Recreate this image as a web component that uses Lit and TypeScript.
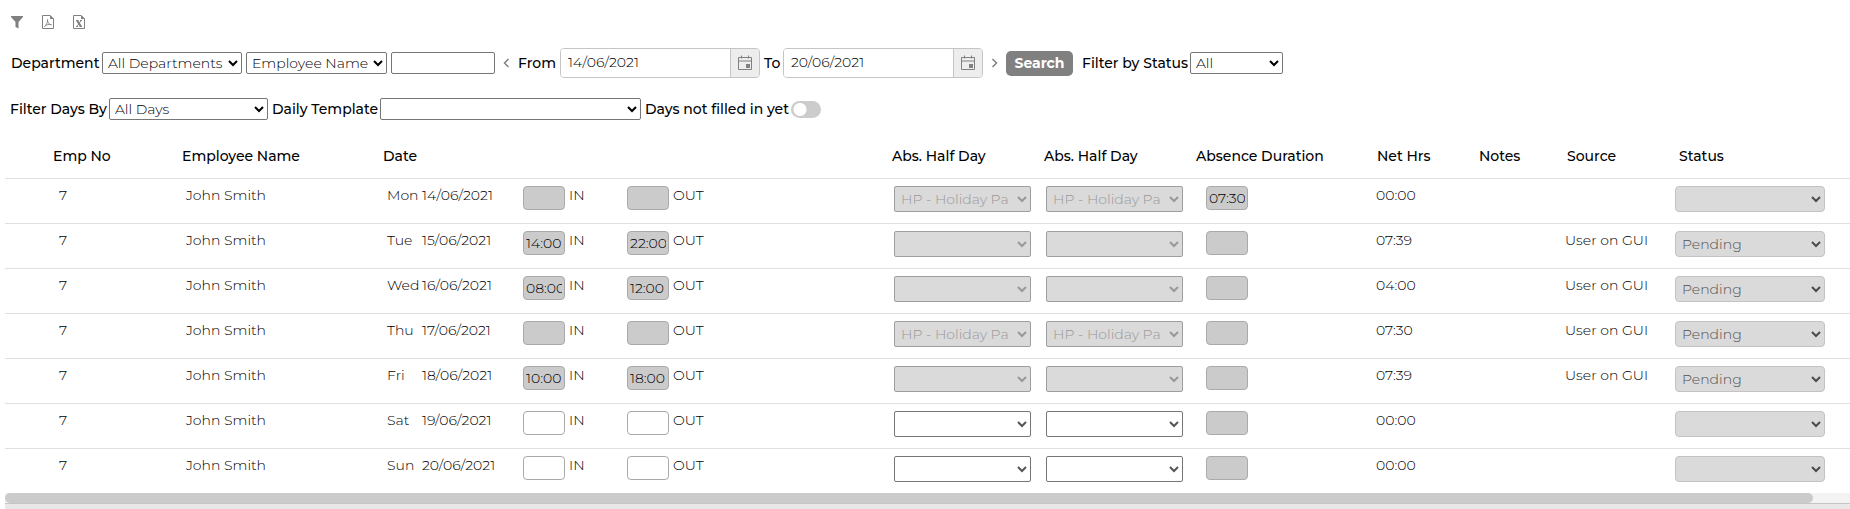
import { LitElement, html, css, svg, nothing } from "lit";
import { customElement } from "lit/decorators.js";

interface Day {
  name: string;
  date: string;
  in: string;
  out: string;
  absence: string;
  duration: string;
  net: string;
  source: string;
  status: string;
  open?: boolean;
}

const HOLIDAY = "HP - Holiday Pa";

const DAYS: Day[] = [
  { name: "Mon", date: "14/06/2021", in: "", out: "", absence: HOLIDAY, duration: "07:30", net: "00:00", source: "", status: "" },
  { name: "Tue", date: "15/06/2021", in: "14:00", out: "22:00", absence: "", duration: "", net: "07:39", source: "User on GUI", status: "Pending" },
  { name: "Wed", date: "16/06/2021", in: "08:00", out: "12:00", absence: "", duration: "", net: "04:00", source: "User on GUI", status: "Pending" },
  { name: "Thu", date: "17/06/2021", in: "", out: "", absence: HOLIDAY, duration: "", net: "07:30", source: "User on GUI", status: "Pending" },
  { name: "Fri", date: "18/06/2021", in: "10:00", out: "18:00", absence: "", duration: "", net: "07:39", source: "User on GUI", status: "Pending" },
  { name: "Sat", date: "19/06/2021", in: "", out: "", absence: "", duration: "", net: "00:00", source: "", status: "", open: true },
  { name: "Sun", date: "20/06/2021", in: "", out: "", absence: "", duration: "", net: "00:00", source: "", status: "", open: true },
];

const sheet = svg`<path d="M.5 .5H8L11.500 4V13.500H.5Z" fill="none" stroke="#808080"/><path d="M8 0L12 4H8Z" fill="#808080"/>`;

@customElement("app-root")
export class AppRoot extends LitElement {
  static styles = css`
    :host {
      display: block;
      background: #fff;
      color: #000;
      font: 300 14px/18px Montserrat, Inter, sans-serif;
    }
    * { box-sizing: border-box; }
    input, select, button { font: inherit; color: inherit; margin: 0; }
    svg { display: block; }
    .tools {
      display: flex;
      gap: 19px;
      padding: 15px 11px 0;
    }
    .tool, .step {
      border: 0;
      padding: 0;
      background: none;
    }
    .filters {
      display: flex;
      align-items: center;
      gap: 4px;
      white-space: nowrap;
      padding-left: 11px;
      height: 30px;
    }
    .first { margin-top: 19px; }
    .second { margin-top: 16px; padding-left: 10px; }
    .label { font-weight: 500; }
    .w-dept { width: 87px; }
    .w-from { width: 38px; }
    .w-to { width: 15px; }
    .w-status { width: 104px; }
    .w-days { width: 95px; }
    .w-template { width: 104px; }
    .w-empty { width: 142px; }
    .box {
      height: 22px;
      border: 1px solid #767676;
      border-radius: 2px;
      background: #fff;
      padding: 0;
    }
    select.box { padding-left: 1px; }
    .s-dept { width: 140px; }
    .s-name { width: 141px; }
    .s-text { width: 104px; }
    .s-status { width: 93px; }
    .s-days { width: 159px; }
    .s-template { width: 261px; }
    .step { width: 7px; margin: 0 4px; }
    .date {
      display: flex;
      width: 200px;
      height: 30px;
      border: 1px solid #c5c5c5;
      border-radius: 4px;
      overflow: hidden;
    }
    .date input {
      flex: 1;
      min-width: 0;
      border: 0;
      padding: 0 7px 3px;
      background: #fff;
    }
    .date button {
      width: 29px;
      border: 0;
      border-left: 1px solid #c5c5c5;
      padding: 0 0 0 6px;
      background: #ededed;
    }
    .search {
      width: 67px;
      height: 25px;
      margin-right: 5px;
      padding: 0;
      border: 0;
      border-radius: 5px;
      background: #808080;
      color: #fff;
      font-weight: 700;
    }
    .toggle {
      appearance: none;
      width: 30px;
      height: 17px;
      border-radius: 9px;
      background: radial-gradient(circle at 9px 50%, #fff 6px, #ccc 7px);
    }
    .toggle:checked { background: radial-gradient(circle at 21px 50%, #fff 6px, #808080 7px); }
    .grid {
      margin: 16px 0 0 5px;
      overflow: hidden;
    }
    table {
      width: 100%;
      table-layout: fixed;
      border-collapse: collapse;
    }
    th {
      height: 38px;
      padding: 0 0 6px;
      text-align: left;
      vertical-align: middle;
      font-weight: 500;
      white-space: nowrap;
    }
    td {
      height: 45px;
      padding: 7px 0 0;
      vertical-align: top;
      white-space: nowrap;
      border-top: 1px solid #e0e0e0;
    }
    .c0 { width: 48px; }
    .c1 { width: 129px; }
    .c2 { width: 201px; }
    .c3 { width: 140px; }
    .c4 { width: 104px; }
    .c5 { width: 264px; }
    .c6 { width: 152px; }
    .c7 { width: 180px; }
    .c8 { width: 102px; }
    .c9 { width: 88px; }
    .c10 { width: 110px; }
    th.abs, th.dur { padding-left: 1px; }
    th.net, th.notes, th.source { padding-left: 2px; }
    th.status { padding-left: 4px; }
    td.num { padding-left: 6px; }
    td.inset { padding-left: 4px; }
    td.abs { padding-left: 3px; }
    td.dur { padding-left: 11px; }
    td.net { padding-left: 1px; }
    .day { display: inline-block; width: 35px; }
    .punch { display: flex; gap: 4px; }
    .time {
      display: block;
      width: 42px;
      height: 24px;
      padding: 0 2px;
      border: 1px solid #aaa;
      border-radius: 4px;
      background: #fff;
    }
    .time:disabled { background: #cbcbcb; color: #000; }
    .absence, .state {
      display: block;
      height: 26px;
      border: 1px solid #767676;
      border-radius: 2px;
      padding: 0 0 0 2px;
      background: #fff;
      color: #555;
    }
    .absence { width: 137px; }
    .absence:disabled {
      border-color: #767676;
      background: #cbcbcb;
      color: #6d6d6d;
      opacity: .7;
    }
    .state {
      width: 150px;
      border-radius: 4px;
      border-color: #aaa;
    }
    .state:disabled { background: #cbcbcb; color: #000; opacity: .7; }
    .track { height: 10px; background: #f3f3f3; }
    .thumb {
      width: 98%;
      height: 10px;
      border-radius: 5px;
      background: #cbcbcb;
    }
    .foot {
      height: 6px;
      border-top: 1px solid #c5c5c5;
      background: #e8e8e8;
    }
  `;

  private date(id: string, value: string) {
    return html`<div class="date">
      <input id=${id} type="text" .value=${value} />
      <button type="button" aria-label="Open calendar">
        <svg width="16" height="16" viewBox="0 0 16 16" fill="none" stroke="#808080">
          <path d="M1.500 2.500h13v12h-13zM1 6h14M4.500 .5v3M11.500 .5v3" />
          <path d="M9 9h4v4H9z" fill="#808080" stroke="none" />
        </svg>
      </button>
    </div>`;
  }

  private step(label: string, d: string) {
    return html`<button class="step" type="button" aria-label=${label}>
      <svg width="7" height="10" viewBox="0 0 7 10" fill="none" stroke="#808080" stroke-width="1.500"><path d=${d} /></svg>
    </button>`;
  }

  private absence(day: Day, label: string) {
    return html`<td class="abs">
      <select class="absence" aria-label=${label} ?disabled=${!day.open}><option>${day.absence}</option></select>
    </td>`;
  }

  private row(day: Day) {
    const locked = !day.open;
    return html`<tr>
      <td></td>
      <td class="num">7</td>
      <td class="inset">John Smith</td>
      <td class="inset"><span class="day">${day.name}</span>${day.date}</td>
      <td><label class="punch"><input class="time" type="text" .value=${day.in} ?disabled=${locked} />IN</label></td>
      <td><label class="punch"><input class="time" type="text" .value=${day.out} ?disabled=${locked} />OUT</label></td>
      ${this.absence(day, "First half day absence")}
      ${this.absence(day, "Second half day absence")}
      <td class="dur"><input class="time" type="text" aria-label="Absence duration" .value=${day.duration} disabled /></td>
      <td class="net">${day.net}</td>
      <td></td>
      <td>${day.source || nothing}</td>
      <td><select class="state" aria-label="Status" disabled><option>${day.status}</option></select></td>
    </tr>`;
  }

  render() {
    return html`
      <div class="tools">
        <button class="tool" type="button" aria-label="Filter">
          <svg width="12" height="14" viewBox="0 0 12 14"><path d="M0 1h12v1L7.500 7v6.500L4.500 12V7L0 2z" fill="#808080" /></svg>
        </button>
        <button class="tool" type="button" aria-label="Export to PDF">
          <svg width="12" height="14" viewBox="0 0 12 14">${sheet}<path d="M2.500 11.500C4 10.500 5.800 7.500 5.500 4.500C5.300 7.500 7 9.500 9.500 9.800C7 9 4.500 9.500 2.500 11.500" fill="none" stroke="#808080" stroke-width=".9" /></svg>
        </button>
        <button class="tool" type="button" aria-label="Export to Excel">
          <svg width="12" height="14" viewBox="0 0 12 14">${sheet}<path d="M4 5.500l4 6" fill="none" stroke="#808080" stroke-width="2" /><path d="M8 5.500l-4 6M3 5.500h2.500M7 5.500h2M3 11.500h2M6.500 11.500H9" fill="none" stroke="#808080" /></svg>
        </button>
      </div>

      <div class="filters first">
        <label class="label w-dept" for="dept">Department</label>
        <select id="dept" class="box s-dept"><option>All Departments</option></select>
        <select class="box s-name" aria-label="Search field"><option>Employee Name</option></select>
        <input class="box s-text" type="text" aria-label="Search text" />
        ${this.step("Previous week", "M5.500 1L1.500 5l4 4")}
        <label class="label w-from" for="from">From</label>
        ${this.date("from", "14/06/2021")}
        <label class="label w-to" for="to">To</label>
        ${this.date("to", "20/06/2021")}
        ${this.step("Next week", "M1.500 1l4 4-4 4")}
        <button class="search" type="button">Search</button>
        <label class="label w-status" for="status">Filter by Status</label>
        <select id="status" class="box s-status"><option>All</option></select>
      </div>

      <div class="filters second">
        <label class="label w-days" for="days">Filter Days By</label>
        <select id="days" class="box s-days"><option>All Days</option></select>
        <label class="label w-template" for="template">Daily Template</label>
        <select id="template" class="box s-template"><option></option></select>
        <label class="label w-empty" for="unfilled">Days not filled in yet</label>
        <input id="unfilled" class="toggle" type="checkbox" />
      </div>

      <div class="grid">
        <table>
          <colgroup>
            <col class="c0" /><col class="c1" /><col class="c2" /><col class="c3" /><col class="c4" /><col class="c5" />
            <col class="c6" /><col class="c6" /><col class="c7" /><col class="c8" /><col class="c9" /><col class="c10" /><col />
          </colgroup>
          <thead>
            <tr>
              <th></th><th>Emp No</th><th>Employee Name</th><th>Date</th><th></th><th></th>
              <th class="abs">Abs. Half Day</th><th class="abs">Abs. Half Day</th><th class="dur">Absence Duration</th>
              <th class="net">Net Hrs</th><th class="notes">Notes</th><th class="source">Source</th><th class="status">Status</th>
            </tr>
          </thead>
          <tbody>${DAYS.map((day) => this.row(day))}</tbody>
        </table>
        <div class="track"><div class="thumb"></div></div>
        <div class="foot"></div>
      </div>
    `;
  }
}
